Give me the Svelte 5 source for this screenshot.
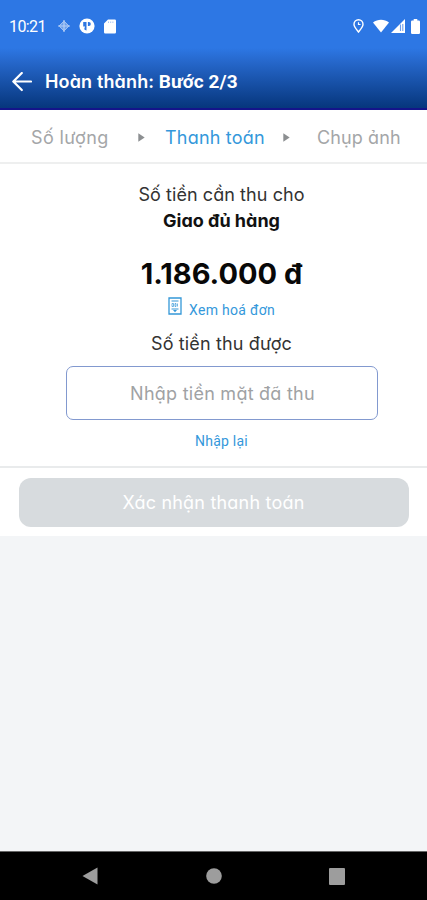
<script>
  let amount = $state('');
  const steps = [
    { id: 'quantity', label: 'Số lượng' },
    { id: 'payment', label: 'Thanh toán' },
    { id: 'photo', label: 'Chụp ảnh' }
  ];
  const current = 'payment';
</script>

<div class="screen">
  <header>
    <div class="status">
      <span class="clock">10:21</span>
      <svg class="sync" width="14" height="14" viewBox="0 0 14 14" fill="none" stroke="#fff">
        <path d="M7 1v12M1 7h12" stroke-width="1.200" />
        <path d="M7 2.200L11.800 7 7 11.800 2.200 7z" fill="#fff" fill-opacity=".45" />
      </svg>
      <svg class="parking" width="16" height="16" viewBox="0 0 16 16">
        <circle cx="8" cy="8" r="7.600" fill="#fff" />
        <path d="M4.200 4h3.300v8.500A4.600 4.600 0 0 1 5.200 11.200L6 8.500H4.200zM8.900 4h.9a2 2 0 0 1 0 4h-.9z" fill="#2d76e2" />
      </svg>
      <svg class="card" width="12" height="15" viewBox="0 0 12 15">
        <path d="M4 .5h6.800A1.200 1.200 0 0 1 12 1.700v11.600a1.200 1.200 0 0 1-1.200 1.200H1.200A1.200 1.200 0 0 1 0 13.300V4.500z" fill="#fff" />
        <path d="M4.500 2.500v1.500M6.700 2.500v1.500M8.900 2.500v1.500" stroke="#a9c7f4" />
      </svg>
      <span class="grow"></span>
      <svg class="pin" width="11" height="14" viewBox="0 0 11 14" fill="none" stroke="#fff">
        <path d="M5.500 13C3.500 10.500 1 8 1 5.300a4.500 4.500 0 0 1 9 0C10 8 7.500 10.500 5.500 13z" stroke-width="1.400" />
        <path d="M5.500 3.200v2.300h2" stroke-width="1.200" />
      </svg>
      <svg class="wifi" width="16" height="14" viewBox="0 0 16 14"><path d="M0 3.400C4.700-.3 11.300-.3 16 3.400L8 13.500z" fill="#fff" /></svg>
      <svg class="signal" width="14" height="14" viewBox="0 0 14 14">
        <path d="M14 0v14H0z" fill="#fff" />
        <path d="M9.500 5.500v6.500M11.800 5v7" stroke="#6b9deb" stroke-width="1.100" />
      </svg>
      <svg class="battery" width="9" height="15" viewBox="0 0 9 15"><path d="M2.700 0h3.600v1.500h1.500A1.200 1.200 0 0 1 9 2.700v11.100A1.200 1.200 0 0 1 7.800 15H1.200A1.200 1.200 0 0 1 0 13.800V2.700a1.200 1.200 0 0 1 1.200-1.200h1.500z" fill="#fff" /></svg>
    </div>
    <div class="bar">
      <svg width="20" height="20" viewBox="0 0 20 20" fill="none" stroke="#fff" stroke-width="2.200" stroke-linecap="round" stroke-linejoin="round">
        <path d="M19 9.500H1.500M9.800 1L1.300 9.500l8.500 8.500" />
      </svg>
      <h1><span class="task">Hoàn thành:</span> <span class="step">Bước 2/3</span></h1>
    </div>
  </header>

  <nav>
    {#each steps as step, i}
      {#if i > 0}
        <svg class="sep" width="7" height="9" viewBox="0 0 7 9"><path d="M.3.300L6.700 4.500.3 8.700z" fill="#8c8f91" /></svg>
      {/if}
      <span class={['tab', step.id, { active: step.id === current }]}>{step.label}</span>
    {/each}
  </nav>

  <main>
    <p class="due">Số tiền cần thu cho</p>
    <p class="kind">Giao đủ hàng</p>
    <p class="total">1.186.000 đ</p>
    <div class="invoice">
      <svg width="14" height="18" viewBox="0 0 14 18" fill="none" stroke="#3498d8">
        <path d="M1 1h12v16H1z" stroke-width="1.300" />
        <path d="M3.500 4h7M3.500 12h7" stroke-width="1.100" />
        <path d="M4 6.500h1.500v3H4zM7 6.500h1v3H7zM9.500 6.500v3" stroke-width=".7" />
        <path d="M5 13h4L7 15.300z" fill="#3498d8" stroke="none" />
      </svg>
      <span>Xem hoá đơn</span>
    </div>
    <p class="got">Số tiền thu được</p>
    <input type="text" placeholder="Nhập tiền mặt đã thu" bind:value={amount} />
    <p class="reset">Nhập lại</p>
  </main>

  <section class="action"><button disabled>Xác nhận thanh toán</button></section>
  <div class="rest"></div>

  <footer>
    <svg width="16" height="18" viewBox="0 0 16 18"><path d="M15.500.5v17L.5 9z" fill="#9d9d9d" /></svg>
    <svg width="16" height="16" viewBox="0 0 16 16"><circle cx="8" cy="8" r="7.800" fill="#9d9d9d" /></svg>
    <svg width="16" height="17" viewBox="0 0 16 17"><rect width="16" height="17" rx="1" fill="#9d9d9d" /></svg>
  </footer>
</div>

<style>
  .screen {
    width: 427px;
    height: 900px;
    overflow: hidden;
    display: flex;
    flex-direction: column;
    background: #fff;
    font-family: Inter, "Noto Sans", sans-serif;
    font-feature-settings: "cv11", "ss03";
  }
  svg { display: block; flex: none; }
  p, h1 { margin: 0; white-space: nowrap; }
  header {
    box-sizing: border-box;
    height: 110px;
    flex: none;
    background: linear-gradient(#2d77e4 0, #2d77e4 48px, #2566c9 63px, #07377e 107px);
    border-bottom: 2px solid #14148a;
    color: #fff;
  }
  .status { height: 52px; display: flex; align-items: center; padding: 0 7px 0 9px; box-sizing: border-box; }
  .clock { font: 400 16px/20px Roboto, sans-serif; width: 48px; letter-spacing: -.6px; margin-top: 2px; }
  .sync { opacity: .65; }
  .parking { margin-left: 8px; }
  .card { margin-left: 9px; }
  .grow { flex: 1; }
  .wifi { margin-left: 9px; }
  .signal { margin-left: 2px; }
  .battery { margin-left: 6px; }
  .bar { height: 60px; display: flex; align-items: center; padding-left: 12px; gap: 13px; }
  h1 { font-size: 18px; line-height: 24px; font-weight: 600; }
  .task { letter-spacing: .15px; }
  .step { font-family: Roboto, sans-serif; font-weight: 700; font-size: 19px; letter-spacing: .1px; }

  nav {
    box-sizing: border-box;
    height: 54px;
    flex: none;
    display: flex;
    align-items: center;
    padding: 4px 0 0 31px;
    border-bottom: 2px solid #eeefef;
    color: #a4a6a8;
    font-size: 18px;
    line-height: 24px;
    white-space: nowrap;
  }
  .quantity { width: 107px; letter-spacing: .35px; }
  .payment { width: 118px; margin-left: 20px; letter-spacing: .2px; }
  .photo { margin-left: 27px; letter-spacing: .1px; }
  .sep { margin-top: -1px; }
  .active { color: #3498db; }

  main {
    box-sizing: border-box;
    height: 304px;
    flex: none;
    display: flex;
    flex-direction: column;
    align-items: center;
    padding: 18px 0 0 16px;
    border-bottom: 2px solid #e9ebec;
    color: #333;
  }
  .due { font-size: 18px; line-height: 26px; letter-spacing: .07px; }
  .kind { font-size: 18px; line-height: 26px; font-weight: 700; color: #111; }
  .total { font-size: 29px; line-height: 40px; font-weight: 650; color: #080808; margin-top: 20px; }
  .invoice { display: flex; gap: 7px; height: 22px; margin-top: 4px; color: #3498db; font: 400 14px/22px Roboto, sans-serif; letter-spacing: .3px; }
  .invoice svg { margin-top: -1px; }
  .invoice span { padding-top: 1px; }
  .got { font-size: 18px; line-height: 26px; margin-top: 11px; letter-spacing: .15px; }
  input {
    box-sizing: border-box;
    width: 312px;
    height: 54px;
    margin: 9px 0 0;
    padding: 0 0 0 2px;
    border: 1.500px solid #8299cf;
    border-radius: 7px;
    background: #fff;
    text-align: center;
    font: inherit;
    font-feature-settings: inherit;
    font-size: 18px;
    letter-spacing: .25px;
  }
  input::placeholder { color: #a0a2a4; opacity: 1; }
  .reset { font: 400 14px/20px Roboto, sans-serif; color: #3498db; margin-top: 11px; letter-spacing: .25px; }
  .action { height: 68px; flex: none; display: flex; justify-content: center; box-sizing: border-box; padding-top: 10px; }
  button {
    width: 390px;
    height: 49px;
    padding: 0;
    border: 0;
    border-radius: 12px;
    background: #d7dbde;
    color: #fff;
    font: inherit;
    font-feature-settings: inherit;
    font-size: 18px;
    letter-spacing: .2px;
  }
  .rest { flex: 1; background: #f3f5f7; }
  footer {
    box-sizing: border-box;
    height: 49px;
    flex: none;
    background: #000;
    border-top: 1px solid #666;
    display: flex;
    align-items: center;
    justify-content: space-between;
    padding: 0 82px;
  }
</style>
